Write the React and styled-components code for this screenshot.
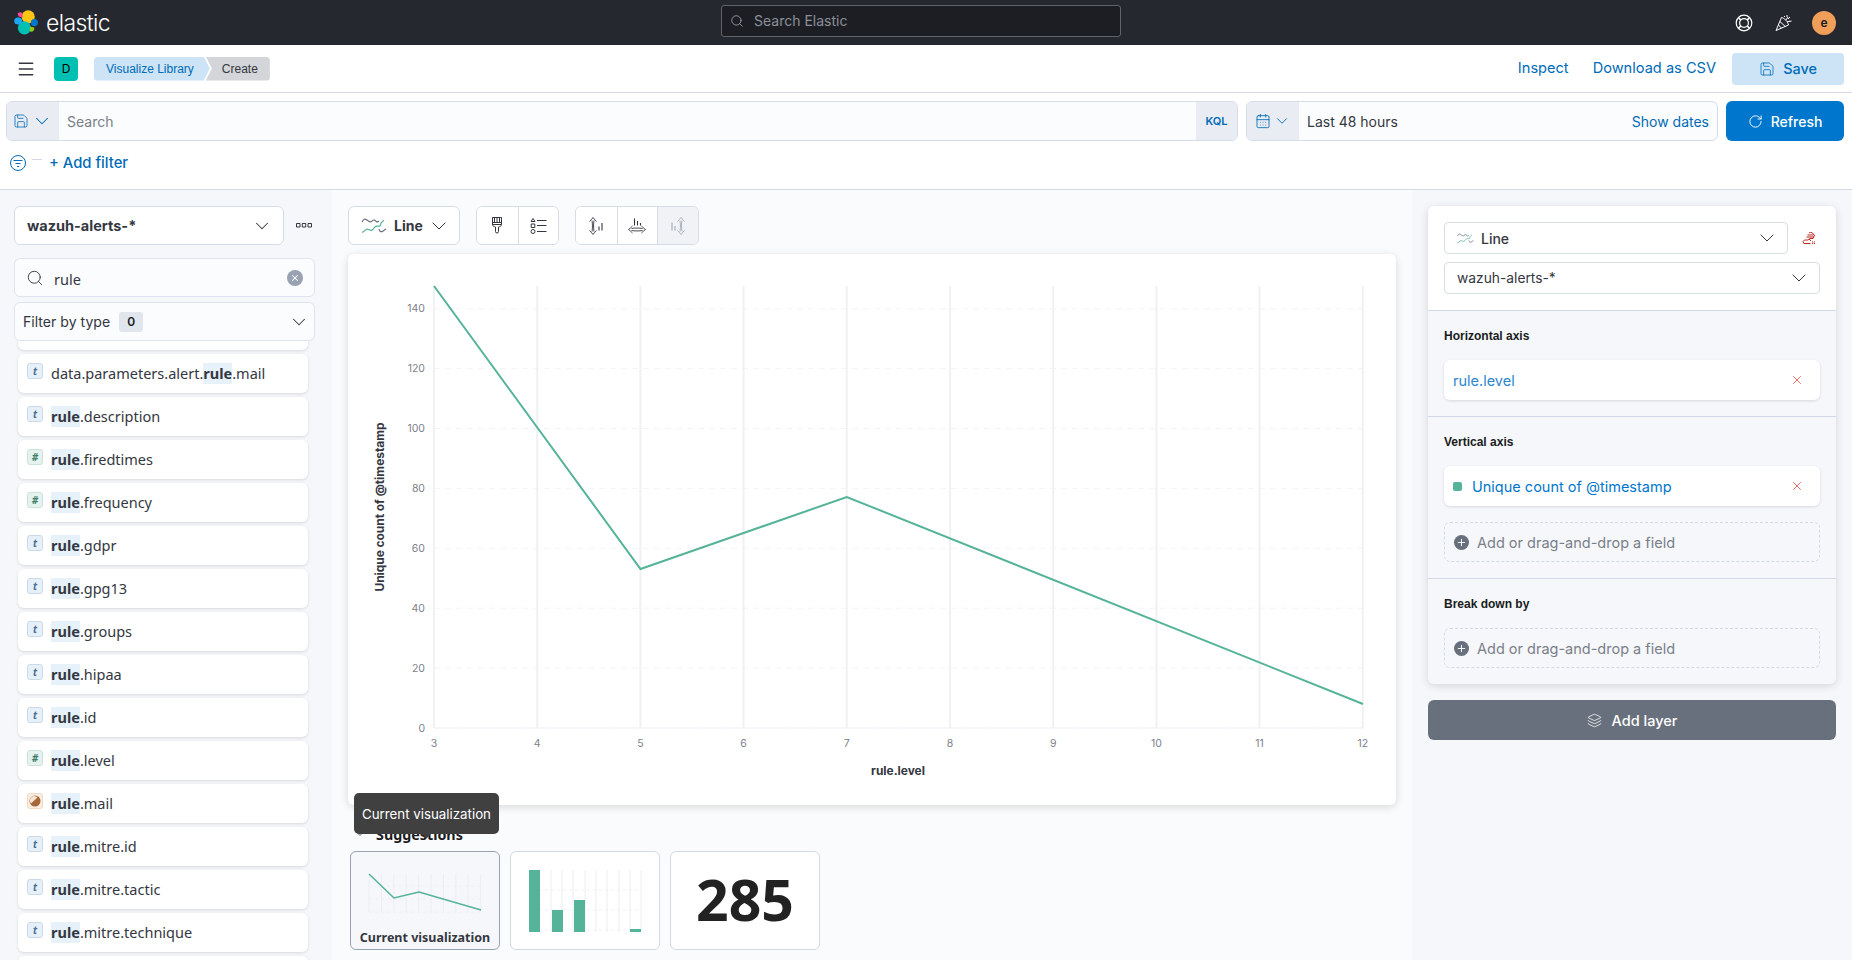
import React from 'react'
import styled, { createGlobalStyle } from 'styled-components'
import { Menu, Search, Save, ChevronDown, RotateCw, CalendarDays, X, Plus, Layers } from 'lucide-react'

const GlobalStyle = createGlobalStyle`
  html, body { margin: 0; padding: 0; height: 100%; overflow: hidden; background: #fff; }
  body { font-family: Inter, "Liberation Sans", sans-serif; color: #343741; }
  * { box-sizing: border-box; }
`

const fields = [
  ['t', 'data.parameters.alert.', 'rule', '.mail'],
  ['t', '', 'rule', '.description'],
  ['#', '', 'rule', '.firedtimes'],
  ['#', '', 'rule', '.frequency'],
  ['t', '', 'rule', '.gdpr'],
  ['t', '', 'rule', '.gpg13'],
  ['t', '', 'rule', '.groups'],
  ['t', '', 'rule', '.hipaa'],
  ['t', '', 'rule', '.id'],
  ['#', '', 'rule', '.level'],
  ['b', '', 'rule', '.mail'],
  ['t', '', 'rule', '.mitre.id'],
  ['t', '', 'rule', '.mitre.tactic'],
  ['t', '', 'rule', '.mitre.technique'],
]

const ElasticLogo = () => (
  <svg width="24" height="25" viewBox="0 0 24 25">
    <circle cx="14.2" cy="6.8" r="6.6" fill="#fec514" />
    <circle cx="10.4" cy="17.8" r="6.6" fill="#00bfb3" />
    <ellipse cx="4.2" cy="11" rx="4" ry="3.6" fill="#1ba9f5" />
    <ellipse cx="20.4" cy="12.6" rx="3.6" ry="3.6" fill="#0077cc" />
    <path d="M3.6 3.6a3 3 0 0 1 4.6-.6l.6 4.6-4.2-1z" fill="#f04e98" />
    <path d="M16 16.6l4.2 1a3 3 0 0 1-4.4 3.6z" fill="#93c90e" />
  </svg>
)

const LifesaverIcon = () => (
  <svg width="18" height="18" viewBox="0 0 18 18" fill="none" stroke="#fff" strokeWidth="1.2">
    <circle cx="9" cy="9" r="7.8" />
    <circle cx="9" cy="9" r="4.4" />
    <path d="M3.4 3.6l2.600 2.600M14.600 3.600l-2.600 2.600M3.400 14.400l2.600-2.600M14.600 14.400l-2.600-2.600" strokeWidth="1.600" />
  </svg>
)

const PartyIcon = () => (
  <svg width="18" height="18" viewBox="0 0 18 18" fill="none" stroke="#fff" strokeWidth="1">
    <path d="M6.500 3.500L1 16.500l12.500-5.500c-.5-3-4-7-7-7.500z" />
    <path d="M4.800 7.500l5.500 5M3.300 11l3.200 3" />
    <path d="M9 2l1 1M12 1v2M15 3l-2 2M16.500 7l-2 .5M11 6l2-3M12 8l3-1" />
  </svg>
)

const LineTypeIcon = ({ size = 26 }) => (
  <svg width={size} height={size * 0.7} viewBox="0 0 26 18" fill="none" strokeWidth="1.2">
    <path d="M1 6c2-4 3-3 5-2s3 3 5 1 3-1 5 1l2-1" stroke="#69707d" />
    <path d="M1 16c2 1 3-3 5-3s3 2 5 1 2-4 5-4 3 1 4-3l3-3" stroke="#54b399" />
    <path d="M18 13c1 3 2 3 4 2l3-2" stroke="#69707d" />
  </svg>
)

const BrushIcon = () => (
  <svg width="14" height="17" viewBox="0 0 14 17" fill="none" stroke="#343741">
    <path d="M2.500.5h9v7h-9z" />
    <path d="M4.500.5v4.500M7 .5v4.500M9.500 .5v4.500" />
    <path d="M2.500 5.500h9M2.500 7.500c0 2 2 2 3 2.500v4.500a1.500 1.500 0 0 0 3 0v-4.500c1-.5 3-.5 3-2.500" />
  </svg>
)

const LegendIcon = () => (
  <svg width="17" height="16" viewBox="0 0 17 16" fill="none" stroke="#343741">
    <path d="M3 .5l2 3h-4z" />
    <path d="M1.200 6h3.600v3.500h-3.600z" />
    <circle cx="3" cy="13.500" r="2" />
    <path d="M7 2.500h9.500M7 7.500h9.500M7 13.500h9.500" />
  </svg>
)

const AxisLeftIcon = () => (
  <svg width="14" height="18" viewBox="0 0 14 18" fill="none" stroke="#343741" strokeWidth=".9">
    <path d="M.5 4.500C1.500 3.500 3 2 4 .5 5 2 6.500 3.500 7.500 4.500M.5 13.500c1 1 2.500 2.500 3.500 4 1-1.500 2.500-3 3.500-4" />
    <path d="M3 3.500c.6 3 .6 8 0 11M5 3.500c-.6 3-.6 8 0 11" />
    <path d="M10 9.500v4M13 6v7.500" strokeWidth="1.100" />
  </svg>
)

const AxisBottomIcon = () => (
  <svg width="18" height="16" viewBox="0 0 18 16" fill="none" stroke="#343741" strokeWidth=".9">
    <path d="M4.500 8C3.500 9 2 10.500.5 11.500 2 12.500 3.500 14 4.500 15M13.500 8c1 1 2.500 2.500 4 3.500-1.500 1-3 2.500-4 3.500" />
    <path d="M3.500 10.500c3-.6 8-.6 11 0M3.500 12.500c3 .6 8 .6 11 0" />
    <path d="M6.500 .5v7M9.500 3v4.500M12.500 5v2.500" strokeWidth="1.100" />
  </svg>
)

const AxisRightIcon = () => (
  <svg width="14" height="18" viewBox="0 0 14 18" fill="none" stroke="#a5abb6" strokeWidth=".9">
    <path d="M6.500 4.500C7.500 3.500 9 2 10 .5c1 1.500 2.500 3 3.500 4M6.500 13.500c1 1 2.500 2.500 3.500 4 1-1.500 2.500-3 3.500-4" />
    <path d="M9 3.500c.6 3 .6 8 0 11M11 3.500c-.6 3-.6 8 0 11" />
    <path d="M1 5.500v8M4 9v4.500" strokeWidth="1.100" />
  </svg>
)

const EraserIcon = () => (
  <svg width="14" height="13" viewBox="0 0 14 13" fill="none" stroke="#bd271e">
    <path d="M7 1a2.500 2.500 0 0 1 3.500 0l2 2.500-1.500 3H8L6 8H2.500L1 9.500l.8 2h6.700" />
    <path d="M5.500 3h6M4.500 5h7.500M7 7l2 2" />
    <path d="M10 9.500l3 2.500M13 9.500l-3 2.500" strokeDasharray="1.500 1" />
  </svg>
)

const FilterCircleIcon = () => (
  <svg width="16" height="16" viewBox="0 0 16 16" fill="none" stroke="#006bb8">
    <circle cx="8" cy="8" r="7.500" />
    <path d="M3.500 5.500h9M5.500 8.500h5M7 11.500h2" />
  </svg>
)

const BooleanIcon = () => (
  <svg width="12" height="12" viewBox="0 0 12 12">
    <circle cx="6" cy="6" r="5.500" fill="#a5683a" />
    <path d="M2 8.500L8.500 2.500a4 4 0 0 0-6.500 6z" fill="#f6e3d3" />
  </svg>
)

const SquareDots = () => (
  <svg width="16" height="5" viewBox="0 0 16 5" fill="none" stroke="#343741">
    <path d="M.5.500h3.500v3.500h-3.500zM6.250.5h3.500v3.500h-3.500zM12 .5h3.500v3.500H12z" />
  </svg>
)

// vertical grid positions of the big chart, one per x tick
const ticksX = [3, 4, 5, 6, 7, 8, 9, 10, 11, 12]
const ticksY = [0, 20, 40, 60, 80, 100, 120, 140]
const px = (v) => 86 + (v - 3) * 103.2
const py = (v) => 474 - v * 2.995

const MainChart = () => (
  <ChartSvg width="1048" height="551" viewBox="0 0 1048 551">
    {ticksY.map((t) => (
      <line key={t} x1="86" x2="1016" y1={py(t)} y2={py(t)} stroke="#f3f4f7" strokeDasharray="6 5" />
    ))}
    {ticksX.map((t) => (
      <line key={t} x1={px(t)} x2={px(t)} y1="32" y2="474" stroke="#eff1f5" strokeWidth="2" />
    ))}
    <line x1="86" x2="1016" y1="474" y2="474" stroke="#eff1f5" />
    <polyline points="86,32 292.500,315 498.800,243 1015,450" fill="none" stroke="#54b399" strokeWidth="2" />
    {ticksY.map((t) => (
      <AxisTick key={t} x="77" y={py(t) + 3.500} textAnchor="end">{t}</AxisTick>
    ))}
    {ticksX.map((t) => (
      <AxisTick key={t} x={px(t)} y="493" textAnchor="middle">{t}</AxisTick>
    ))}
    <AxisTitle x="33" y="253" textAnchor="middle" transform="rotate(-90 33 253)" dominantBaseline="middle">Unique count of @timestamp</AxisTitle>
    <AxisTitle x="550" y="521" textAnchor="middle">rule.level</AxisTitle>
  </ChartSvg>
)

const ThumbLine = () => (
  <svg width="148" height="72" viewBox="0 0 148 72">
    {[0, 1, 2, 3, 4, 5, 6, 7, 8, 9].map((i) => (
      <line key={i} x1={18 + i * 12.4} x2={18 + i * 12.4} y1="22" y2="60" stroke="#eceef3" />
    ))}
    {[34, 47, 60].map((y) => (
      <line key={y} x1="18" x2="130" y1={y} y2={y} stroke="#eef0f4" strokeDasharray="3 3" />
    ))}
    <polyline points="18,22 43,46 68,40 130,58" fill="none" stroke="#54b399" strokeWidth="1.500" />
  </svg>
)

const ThumbBars = () => (
  <svg width="148" height="97" viewBox="0 0 148 97">
    {[40, 51, 62, 74, 85, 96, 108, 119, 130].map((x) => (
      <line key={x} x1={x} x2={x} y1="18" y2="80" stroke="#eceef3" />
    ))}
    {[38, 58, 78].map((y) => (
      <line key={y} x1="28" x2="130" y1={y} y2={y} stroke="#eef0f4" strokeDasharray="3 3" />
    ))}
    <rect x="18" y="18" width="11" height="62" fill="#54b399" />
    <rect x="41" y="58" width="11" height="22" fill="#54b399" />
    <rect x="63" y="48" width="11" height="32" fill="#54b399" />
    <rect x="119" y="77" width="11" height="3" fill="#54b399" />
  </svg>
)

export default function App() {
  return (
    <Page>
      <GlobalStyle />
      <TopBar>
        <Brand><ElasticLogo /><BrandName>elastic</BrandName></Brand>
        <GlobalSearch><Search size={14} strokeWidth={1.500} color="#9ca1a9" /><span>Search Elastic</span></GlobalSearch>
        <TopIcons>
          <LifesaverIcon />
          <PartyIcon />
          <Avatar>e</Avatar>
        </TopIcons>
      </TopBar>

      <NavBar>
        <Menu size={20} strokeWidth={1.800} color="#343741" />
        <SpaceBadge>D</SpaceBadge>
        <Crumbs>
          <CrumbFirst>Visualize Library</CrumbFirst>
          <CrumbLast>Create</CrumbLast>
        </Crumbs>
        <NavActions>
          <NavLink>Inspect</NavLink>
          <NavLink>Download as CSV</NavLink>
          <SaveButton><Save size={16} strokeWidth={1.200} /> Save</SaveButton>
        </NavActions>
      </NavBar>

      <QueryBar>
        <QueryField>
          <Prepend>
            <Save size={16} strokeWidth={1.200} color="#006bb8" />
            <ChevronDown size={22} strokeWidth={1.100} color="#006bb8" />
          </Prepend>
          <QueryText>Search</QueryText>
          <KqlTag>KQL</KqlTag>
        </QueryField>
        <DateField>
          <Prepend>
            <CalendarDays size={16} strokeWidth={1.300} color="#006bb8" />
            <ChevronDown size={18} strokeWidth={1.200} color="#006bb8" />
          </Prepend>
          <DateText>Last 48 hours</DateText>
          <ShowDates>Show dates</ShowDates>
        </DateField>
        <RefreshButton><RotateCw size={15} strokeWidth={1.500} /> Refresh</RefreshButton>
      </QueryBar>

      <FilterRow>
        <FilterCircleIcon />
        <FilterDash />
        <AddFilter>+ Add filter</AddFilter>
      </FilterRow>

      <Main>
        <LeftColumn>
          <IndexRow>
            <IndexSelect>wazuh-alerts-*<ChevronDown size={22} strokeWidth={1.100} color="#343741" /></IndexSelect>
            <SquareDots />
          </IndexRow>
          <FieldSearch>
            <Search size={18} strokeWidth={1.200} color="#343741" />
            <FieldSearchText>rule</FieldSearchText>
            <ClearDot><X size={10} strokeWidth={2.500} color="#fff" /></ClearDot>
          </FieldSearch>
          <TypeFilter>
            Filter by type <CountBadge>0</CountBadge>
            <TypeChevron><ChevronDown size={22} strokeWidth={1.100} color="#343741" /></TypeChevron>
          </TypeFilter>
          <FieldScroller>
            <FieldList>
              <FieldItem />
              {fields.map(([type, before, match, after], i) => (
                <FieldItem key={i}>
                  <Token $type={type}>{type === 'b' ? <BooleanIcon /> : type}</Token>
                  <FieldName>{before}<Match>{match}</Match>{after}</FieldName>
                </FieldItem>
              ))}
              <FieldItem />
            </FieldList>
          </FieldScroller>
        </LeftColumn>

        <CenterColumn>
          <Toolbar>
            <ChartTypeButton><LineTypeIcon /> Line <ChevronDown size={24} strokeWidth={1} color="#343741" /></ChartTypeButton>
            <ButtonGroup>
              <GroupButton><BrushIcon /></GroupButton>
              <GroupButton><LegendIcon /></GroupButton>
            </ButtonGroup>
            <ButtonGroup>
              <GroupButton><AxisLeftIcon /></GroupButton>
              <GroupButton><AxisBottomIcon /></GroupButton>
              <GroupButton $disabled><AxisRightIcon /></GroupButton>
            </ButtonGroup>
          </Toolbar>
          <ChartPanel><MainChart /></ChartPanel>
          <Suggestions>
            <Tooltip>Current visualization</Tooltip>
            <SuggestionsTitle><ChevronDown size={12} strokeWidth={1.500} color="#343741" /> Suggestions</SuggestionsTitle>
            <Cards>
              <Card $active>
                <ThumbLine />
                <CardLabel>Current visualization</CardLabel>
              </Card>
              <Card><ThumbBars /></Card>
              <Card><BigNumber>285</BigNumber></Card>
            </Cards>
          </Suggestions>
        </CenterColumn>

        <RightColumn>
          <LayerCard>
            <LayerHead>
              <LayerTypeRow>
                <SelectBox $grow>
                  <SelectLabel><LineTypeIcon size={17} /> <b>Line</b></SelectLabel>
                  <ChevronDown size={24} strokeWidth={1} color="#343741" />
                </SelectBox>
                <EraserIcon />
              </LayerTypeRow>
              <SelectBox>
                <SelectLabel>wazuh-alerts-*</SelectLabel>
                <ChevronDown size={24} strokeWidth={1} color="#343741" />
              </SelectBox>
            </LayerHead>
            <AxisSection>
              <AxisLabel>Horizontal axis</AxisLabel>
              <DimensionBox>
                <DimensionName $light>rule.level</DimensionName>
                <X size={14} strokeWidth={1.200} color="#d0342a" />
              </DimensionBox>
            </AxisSection>
            <AxisSection>
              <AxisLabel>Vertical axis</AxisLabel>
              <DimensionBox>
                <Swatch />
                <DimensionName>Unique count of @timestamp</DimensionName>
                <X size={14} strokeWidth={1.200} color="#d0342a" />
              </DimensionBox>
              <DropZone><PlusDot><Plus size={11} strokeWidth={2} color="#fff" /></PlusDot>Add or drag-and-drop a field</DropZone>
            </AxisSection>
            <AxisSection>
              <AxisLabel>Break down by</AxisLabel>
              <DropZone $first><PlusDot><Plus size={11} strokeWidth={2} color="#fff" /></PlusDot>Add or drag-and-drop a field</DropZone>
            </AxisSection>
          </LayerCard>
          <AddLayer><Layers size={15} strokeWidth={1.200} /> Add layer</AddLayer>
        </RightColumn>
      </Main>
    </Page>
  )
}

const Page = styled.div`
  display: flex;
  flex-direction: column;
  height: 960px;
  overflow: hidden;
`

const TopBar = styled.header`
  display: grid;
  grid-template-columns: 721px 400px 1fr;
  align-items: center;
  height: 45px;
  background: #25282f;
`

const Brand = styled.div`
  display: flex;
  align-items: center;
  gap: 8px;
  padding-left: 14px;
`

const BrandName = styled.span`
  color: #fff;
  font-size: 23px;
  font-weight: 300;
  letter-spacing: -0.6px;
`

const GlobalSearch = styled.div`
  display: flex;
  align-items: center;
  gap: 10px;
  height: 32px;
  margin-top: -4px;
  padding-left: 8px;
  background: #1d1e24;
  border: 1px solid #5f636b;
  border-radius: 3px;
  color: #8b9099;
  font-size: 14px;
`

const TopIcons = styled.div`
  display: flex;
  align-items: center;
  justify-content: flex-end;
  gap: 22px;
  padding-right: 16px;
`

const Avatar = styled.div`
  display: flex;
  align-items: center;
  justify-content: center;
  width: 24px;
  height: 24px;
  margin-left: -3px;
  border-radius: 50%;
  background: #f19f58;
  color: #1a1c21;
  font-size: 12px;
  font-weight: 600;
`

const NavBar = styled.nav`
  display: flex;
  align-items: center;
  height: 48px;
  padding: 0 8px 0 16px;
  border-bottom: 1px solid #d3dae6;
`

const SpaceBadge = styled.div`
  display: flex;
  align-items: center;
  justify-content: center;
  width: 24px;
  height: 24px;
  margin-left: 18px;
  border-radius: 4px;
  background: #00bfb3;
  color: #000;
  font-size: 12px;
`

const Crumbs = styled.div`
  display: flex;
  margin-left: 16px;
  border-radius: 4px;
  overflow: hidden;
  font: 12px/24px "Liberation Sans", sans-serif;
`

const CrumbFirst = styled.div`
  padding: 0 16px 0 12px;
  background: #cce4f5;
  color: #006bb8;
  clip-path: polygon(0 0, calc(100% - 6px) 0, 100% 50%, calc(100% - 6px) 100%, 0 100%);
`

const CrumbLast = styled.div`
  margin-left: -4px;
  padding: 0 12px 0 16px;
  background: #d3d5d8;
  color: #343741;
  clip-path: polygon(0 0, 100% 0, 100% 100%, 0 100%, 6px 50%);
`

const NavActions = styled.div`
  display: flex;
  align-items: center;
  margin-left: auto;
`

const NavLink = styled.a`
  margin: -2px 24px 0 0;
  color: #006bb8;
  font-size: 14.6px;
  &:nth-child(2) { margin-right: 16px; }
`

const SaveButton = styled.button`
  display: flex;
  align-items: center;
  justify-content: center;
  gap: 8px;
  width: 112px;
  height: 32px;
  border: 0;
  border-radius: 4px;
  background: #cce4f5;
  color: #006bb8;
  font: 500 14.4px Inter, sans-serif;
`

const QueryBar = styled.div`
  display: flex;
  gap: 8px;
  height: 48px;
  padding: 8px 8px 0 6px;
`

const fieldFrame = `
  display: flex;
  align-items: stretch;
  height: 40px;
  background: #fbfcfd;
  border: 1px solid #d7dde8;
  border-radius: 6px;
  overflow: hidden;
`

const QueryField = styled.div`
  ${fieldFrame}
  width: 1232px;
`

const DateField = styled.div`
  ${fieldFrame}
  width: 472px;
`

const Prepend = styled.div`
  display: flex;
  align-items: center;
  justify-content: center;
  gap: 2px;
  flex: none;
  width: 52px;
  background: #e9edf3;
`

const QueryText = styled.div`
  display: flex;
  align-items: center;
  flex: 1;
  padding-left: 8px;
  color: #7a7f89;
  font-size: 14px;
`

const KqlTag = styled.div`
  display: flex;
  align-items: center;
  justify-content: center;
  width: 41px;
  background: #e9edf3;
  color: #006bb8;
  font-size: 11px;
  font-weight: 600;
`

const DateText = styled.div`
  display: flex;
  align-items: center;
  flex: 1;
  padding-left: 8px;
  color: #343741;
  font-size: 14px;
`

const ShowDates = styled.div`
  display: flex;
  align-items: center;
  padding-right: 8px;
  color: #006bb8;
  font-size: 14px;
`

const RefreshButton = styled.button`
  display: flex;
  align-items: center;
  justify-content: center;
  gap: 8px;
  width: 118px;
  height: 40px;
  border: 0;
  border-radius: 6px;
  background: #0077cc;
  color: #fff;
  font: 500 14px Inter, sans-serif;
`

const FilterRow = styled.div`
  display: flex;
  align-items: center;
  height: 49px;
  padding: 0 0 5px 10px;
  border-bottom: 1px solid #d3dae6;
`

const FilterDash = styled.div`
  width: 10px;
  height: 1px;
  margin: -6px 0 0 6px;
  background: #d3dae6;
`

const AddFilter = styled.a`
  margin-left: 7px;
  color: #006bb8;
  font-size: 14.8px;
  font-weight: 500;
`

const Main = styled.main`
  display: grid;
  grid-template-columns: 332px 1fr 440px;
  flex: 1;
  min-height: 0;
`

const LeftColumn = styled.aside`
  display: flex;
  flex-direction: column;
  min-height: 0;
  padding: 16px 17px 0 14px;
  background: #f5f7fa;
`

const IndexRow = styled.div`
  display: flex;
  align-items: center;
  justify-content: space-between;
  padding-right: 3px;
`

const IndexSelect = styled.div`
  display: flex;
  align-items: center;
  justify-content: space-between;
  width: 270px;
  height: 39px;
  padding: 0 10px 0 12px;
  background: #fff;
  border: 1px solid #d7dde8;
  border-radius: 6px;
  font-size: 14.5px;
  font-weight: 700;
`

const FieldSearch = styled.div`
  display: flex;
  align-items: center;
  height: 39px;
  margin-top: 13px;
  padding: 0 11px;
  background: #fbfcfd;
  border: 1px solid #dfe4ed;
  border-radius: 6px;
`

const FieldSearchText = styled.span`
  flex: 1;
  margin: 2px 0 0 10px;
  font: 14.5px "Noto Sans", sans-serif;
`

const ClearDot = styled.span`
  display: flex;
  align-items: center;
  justify-content: center;
  width: 16px;
  height: 16px;
  border-radius: 50%;
  background: #98a2b3;
`

const TypeFilter = styled.div`
  display: flex;
  align-items: center;
  height: 39px;
  margin-top: 5px;
  padding: 0 4px 0 8px;
  background: #fbfcfd;
  border: 1px solid #dfe4ed;
  border-radius: 6px;
  font-size: 14.1px;
`

const CountBadge = styled.span`
  display: flex;
  align-items: center;
  justify-content: center;
  width: 24px;
  height: 20px;
  margin-left: 9px;
  background: #e0e5ee;
  border-radius: 3px;
  color: #1a1c21;
  font-size: 12px;
  font-weight: 600;
`

const TypeChevron = styled.span`
  display: flex;
  margin-left: auto;
`

const FieldScroller = styled.div`
  flex: 1;
  min-height: 0;
  overflow: hidden;
`

const FieldList = styled.ul`
  display: flex;
  flex-direction: column;
  gap: 4px;
  margin: -30px 0 0;
  padding: 0 7px 0 4px;
  list-style: none;
`

const FieldItem = styled.li`
  display: flex;
  align-items: flex-start;
  gap: 8px;
  flex: none;
  height: 39px;
  padding: 9px 9px 0;
  background: #fff;
  border-radius: 6px;
  box-shadow: 0 1px 3px rgba(0, 0, 0, 0.13);
`

const tokenColors = {
  t: ['#e7f0f8', '#c9dbea', '#4a7194'],
  '#': ['#e6f2ee', '#c9e3da', '#3f7f6c'],
  b: ['#fbeee2', '#f3d9c2', '#a5683a'],
}

const Token = styled.span`
  display: flex;
  align-items: center;
  justify-content: center;
  flex: none;
  width: 16px;
  height: 16px;
  background: ${(p) => tokenColors[p.$type][0]};
  border: 1px solid ${(p) => tokenColors[p.$type][1]};
  border-radius: 3px;
  color: ${(p) => tokenColors[p.$type][2]};
  font: italic 700 10px "Noto Sans", sans-serif;
`

const FieldName = styled.span`
  font: 14.5px/21px "Noto Sans", sans-serif;
  color: #343741;
`

const Match = styled.mark`
  display: inline-block;
  background: #e6f1fa;
  color: #343741;
  font-weight: 700;
`

const CenterColumn = styled.section`
  display: flex;
  flex-direction: column;
  padding: 16px 16px 0;
  background: #fafbfd;
`

const Toolbar = styled.div`
  display: flex;
  gap: 16px;
  height: 39px;
`

const ChartTypeButton = styled.div`
  display: flex;
  align-items: center;
  gap: 7px;
  width: 112px;
  padding-left: 12px;
  background: #fff;
  border: 1px solid #d7dde8;
  border-radius: 6px;
  font-size: 14px;
  font-weight: 700;
  & > svg:last-child { margin-left: -3px; }
`

const ButtonGroup = styled.div`
  display: flex;
  border: 1px solid #d7dde8;
  border-radius: 6px;
  overflow: hidden;
`

const GroupButton = styled.div`
  display: flex;
  align-items: center;
  justify-content: center;
  width: 40.5px;
  background: ${(p) => (p.$disabled ? '#f0f2f6' : '#fff')};
  & + & { border-left: 1px solid #d7dde8; }
`

const ChartPanel = styled.div`
  height: 551px;
  margin-top: 9px;
  background: #fff;
  border-radius: 6px;
  box-shadow: 0 2px 8px rgba(0, 0, 0, 0.14);
`

const ChartSvg = styled.svg`
  display: block;
`

const AxisTick = styled.text`
  fill: #7d818b;
  font: 10.5px Inter, sans-serif;
`

const AxisTitle = styled.text`
  fill: #343741;
  font: 700 11.900px Inter, sans-serif;
`

const Suggestions = styled.div`
  position: relative;
  padding: 22px 2px 0;
`

const Tooltip = styled.div`
  position: absolute;
  z-index: 2;
  left: 6px;
  top: -12px;
  display: flex;
  align-items: center;
  height: 41px;
  padding: 0 8px;
  border-radius: 5px;
  background: #404040;
  color: #fff;
  font: 13.300px Inter, sans-serif;
  &::after {
    content: '';
    position: absolute;
    left: 69px;
    bottom: -3px;
    width: 7px;
    height: 7px;
    background: #404040;
    transform: rotate(45deg);
  }
`

const SuggestionsTitle = styled.div`
  display: flex;
  align-items: center;
  gap: 10px;
  height: 16px;
  margin-top: -1px;
  padding-left: 4px;
  color: #1a1c21;
  font: 700 14.3px "Noto Sans", sans-serif;
`

const Cards = styled.div`
  display: flex;
  gap: 10px;
  margin-top: 9px;
`

const Card = styled.div`
  display: flex;
  flex-direction: column;
  align-items: center;
  justify-content: flex-start;
  width: 150px;
  height: 99px;
  background: ${(p) => (p.$active ? '#f5f7fa' : '#fff')};
  border: 1px solid ${(p) => (p.$active ? '#98a2b3' : '#d3dae6')};
  border-radius: 6px;
`

const CardLabel = styled.div`
  margin-top: 5px;
  color: #343741;
  font: 700 12.500px "Noto Sans", sans-serif;
`

const BigNumber = styled.div`
  margin-top: 7px;
  color: #222;
  font: 700 57px/80px "Noto Sans", sans-serif;
`

const RightColumn = styled.aside`
  display: flex;
  flex-direction: column;
  gap: 16px;
  padding: 16px 16px 0;
  background: #f5f7fa;
`

const LayerCard = styled.div`
  background: #f5f7fa;
  border-radius: 6px;
  box-shadow: 0 2px 8px rgba(0, 0, 0, 0.14);
  overflow: hidden;
`

const LayerHead = styled.div`
  display: flex;
  flex-direction: column;
  gap: 8px;
  height: 104px;
  padding: 16px;
  background: #fff;
`

const LayerTypeRow = styled.div`
  display: flex;
  align-items: center;
  gap: 14px;
  padding-right: 4px;
`

const SelectBox = styled.div`
  display: flex;
  align-items: center;
  justify-content: space-between;
  flex: ${(p) => (p.$grow ? 1 : 'none')};
  height: 32px;
  padding: 0 8px 0 12px;
  background: #fff;
  border: 1px solid #d7dde8;
  border-radius: 4px;
  font-size: 13.800px;
`

const SelectLabel = styled.span`
  display: flex;
  align-items: center;
  gap: 7px;
  & b { font-size: 14px; font-weight: 500; }
`

const AxisSection = styled.div`
  display: flex;
  flex-direction: column;
  padding: 15px 16px 16px;
  border-top: 1px solid #d3dae6;
`

const AxisLabel = styled.div`
  height: 20px;
  margin-bottom: 14px;
  color: #1a1c21;
  font: 700 12px/20px "Liberation Sans", sans-serif;
`

const DimensionBox = styled.div`
  display: flex;
  align-items: center;
  height: 40px;
  padding: 0 16px 0 9px;
  background: #fff;
  border-radius: 6px;
  box-shadow: 0 1px 3px rgba(0, 0, 0, 0.12);
  & > svg { flex: none; }
`

const Swatch = styled.span`
  flex: none;
  width: 9px;
  height: 9px;
  margin-right: 10px;
  border-radius: 2px;
  background: #54b399;
`

const DimensionName = styled.span`
  flex: 1;
  color: ${(p) => (p.$light ? '#2b86cf' : '#0077cc')};
  font-size: 14.5px;
`

const DropZone = styled.div`
  display: flex;
  align-items: center;
  gap: 8px;
  height: 40px;
  margin-top: ${(p) => (p.$first ? 0 : 16)}px;
  padding-left: 9px;
  border: 1px dashed #d3dae6;
  border-radius: 6px;
  color: #7a7f89;
  font-size: 14.5px;
`

const PlusDot = styled.span`
  display: flex;
  align-items: center;
  justify-content: center;
  width: 15px;
  height: 15px;
  border-radius: 50%;
  background: #69707d;
`

const AddLayer = styled.button`
  display: flex;
  align-items: center;
  justify-content: center;
  gap: 10px;
  height: 40px;
  border: 0;
  border-radius: 6px;
  background: #69707d;
  color: #fff;
  font: 500 14.5px Inter, sans-serif;
`
